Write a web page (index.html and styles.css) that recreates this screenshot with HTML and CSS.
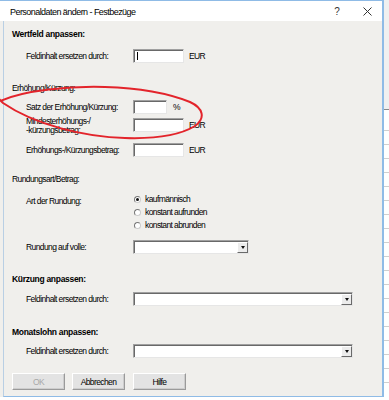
FILE: index.html
```html
<!DOCTYPE html>
<html lang="de">
<head>
    <meta charset="UTF-8">
    <title>Personaldaten ändern - Festbezüge</title>
    <link rel="stylesheet" href="styles.css">
</head>
<body>
<div class="win">
    <div class="titlebar">
        <span class="title">Personaldaten ändern - Festbezüge</span>
        <span class="tbtn help">?</span>
        <span class="tbtn close">
            <svg width="9" height="9" viewBox="0 0 9 9"><path d="M0.5 0.5L8.5 8.5M8.5 0.5L0.5 8.5" stroke="#333" stroke-width="1"/></svg>
        </span>
    </div>
    <div class="client">
        <div class="head bold h1">Wertfeld anpassen:</div>
        <div class="row r1">
            <label>Feldinhalt ersetzen durch:</label>
            <span class="edit w51 caret"></span>
            <span class="unit">EUR</span>
        </div>

        <div class="head h2">Erhöhung/Kürzung:</div>
        <div class="row r2">
            <label>Satz der Erhöhung/Kürzung:</label>
            <span class="edit w34"></span>
            <span class="unit pct">%</span>
        </div>
        <div class="row r3">
            <label class="two">Mindesterhöhungs-/<br>-kürzungsbetrag:</label>
            <span class="edit w51"></span>
            <span class="unit">EUR</span>
        </div>
        <div class="row r4">
            <label>Erhöhungs-/Kürzungsbetrag:</label>
            <span class="edit w51"></span>
            <span class="unit">EUR</span>
        </div>

        <div class="head h3">Rundungsart/Betrag:</div>
        <div class="row r5 top">
            <label class="art">Art der Rundung:</label>
            <ul class="radios">
                <li><span class="radio on"></span>kaufmännisch</li>
                <li><span class="radio"></span>konstant aufrunden</li>
                <li><span class="radio"></span>konstant abrunden</li>
            </ul>
        </div>
        <div class="row r6">
            <label>Rundung auf volle:</label>
            <span class="edit combo w116"><span class="drop"></span></span>
        </div>

        <div class="head bold h4">Kürzung anpassen:</div>
        <div class="row r7">
            <label>Feldinhalt ersetzen durch:</label>
            <span class="edit combo w220"><span class="drop"></span></span>
        </div>

        <div class="head bold h5">Monatslohn anpassen:</div>
        <div class="row r8">
            <label>Feldinhalt ersetzen durch:</label>
            <span class="edit combo w220"><span class="drop"></span></span>
        </div>

        <div class="buttons">
            <button class="btn off">OK</button>
            <button class="btn">Abbrechen</button>
            <button class="btn hilfe">Hilfe</button>
        </div>
    </div>
</div>
<svg class="mark" width="389" height="400" viewBox="0 0 389 400">
    <path d="M0 101 C25 90 70 86 105 87 C140 88 170 94 190 102 C203 108 206 118 195 126 C180 135 155 139 125 138 C85 137 35 125 3 103 C1 101 0 100 -1 99" fill="none" stroke="#e3242b" stroke-width="2"/>
</svg>
</body>
</html>
```

FILE: styles.css
```css
*{
    margin: 0;
    padding: 0;
    box-sizing: border-box;
}
ul{
    list-style: none;
}
body{
    width: 389px;
    height: 400px;
    overflow: hidden;
    position: relative;
    font-family: "Liberation Sans", Arial, sans-serif;
    font-size: 8.5px;
    letter-spacing: -0.6px;
    color: #000;
    background:
        linear-gradient(#f0f0f0, #f0f0f0) 0 0 / 100% 109px no-repeat,
        linear-gradient(#8a8a8a, #8a8a8a) 0 109px / 100% 1px no-repeat,
        repeating-linear-gradient(#fff 0 13px, #cfcfcf 13px 14px) 0 117px / 100% 270px no-repeat,
        #fff;
}
.win{
    width: 384px;
    height: 397px;
    border-top: 1px solid #8fbbe6;
    border-right: 2px solid #8fbbe6;
    background: #f0efec;
}
.titlebar{
    height: 20px;
    background: #fff;
    display: flex;
    align-items: center;
    padding-left: 10px;
}
.title{
    font-size: 9px;
    letter-spacing: -0.55px;
    color: #000;
    margin-top: 1px;
}
.tbtn{
    width: 30px;
    height: 20px;
    display: flex;
    align-items: center;
    justify-content: center;
}
.help{
    margin-left: auto;
    font-size: 10px;
    letter-spacing: 0;
    color: #333;
}
.client{
    height: 376px;
    margin-left: 3px;
    border-left: 1px solid #b9cfe4;
    border-bottom: 1px solid #8fbbe6;
    padding: 7px 0 0 8px;
}
.head{
    height: 12px;
    line-height: 12px;
}
.bold{
    font-weight: bold;
    letter-spacing: -0.3px;
}
.h2{ margin-top: 19px; }
.h3{ margin-top: 16px; }
.h4{ margin-top: 19px; }
.h5{ margin-top: 20px; }
.row{
    display: flex;
    align-items: center;
    height: 14px;
    margin-left: 14px;
}
.row.top{
    align-items: flex-start;
    height: auto;
}
.row label{
    width: 107px;
    flex: none;
    line-height: 12px;
}
.row label.two{
    line-height: 9px;
    padding-top: 2px;
}
.row label.art{
    line-height: 13px;
    padding-top: 2px;
}
.r1{ margin-top: 9px; }
.r2{ margin-top: 6px; }
.r3{ margin-top: 4px; }
.r4{ margin-top: 11px; }
.r5{ margin-top: 8px; }
.r6{ margin-top: 8px; }
.r7{ margin-top: 7px; }
.r8{ margin-top: 6px; }
.edit{
    display: inline-block;
    height: 14px;
    background: #fff;
    border: 1px solid;
    border-color: #a0a0a0 #e6e6e6 #e6e6e6 #a0a0a0;
    box-shadow: inset 1px 1px 0 #696969;
    position: relative;
}
.w34{ width: 34px; }
.w51{ width: 51px; }
.w116{ width: 116px; }
.w220{ width: 220px; }
.caret::after{
    content: "";
    position: absolute;
    left: 3px;
    top: 2px;
    width: 1px;
    height: 8px;
    background: #000;
}
.unit{
    margin-left: 5px;
}
.pct{
    margin-left: 6px;
}
.radios li{
    height: 13px;
    line-height: 13px;
    display: flex;
    align-items: center;
}
.radio{
    width: 7px;
    height: 7px;
    border-radius: 50%;
    border: 1px solid;
    border-color: #777 #ccc #ccc #777;
    background: #fff;
    margin: 0 4px 0 1px;
    position: relative;
}
.radio.on::after{
    content: "";
    position: absolute;
    left: 1px;
    top: 1px;
    width: 3px;
    height: 3px;
    border-radius: 50%;
    background: #111;
}
.combo{
    display: inline-flex;
    justify-content: flex-end;
    padding: 1px 0 0 0;
}
.drop{
    width: 11px;
    height: 11px;
    background: #ececec;
    border: 1px solid;
    border-color: #fff #6a6a6a #6a6a6a #fff;
    display: flex;
    align-items: center;
    justify-content: center;
}
.drop::after{
    content: "";
    border-left: 2.5px solid transparent;
    border-right: 2.5px solid transparent;
    border-top: 3px solid #111;
}
.buttons{
    display: flex;
    margin-top: 15px;
}
.btn{
    width: 53px;
    height: 17px;
    margin-right: 7px;
    font-family: inherit;
    font-size: 8.5px;
    letter-spacing: -0.6px;
    color: #000;
    background: #e3e3e3;
    border: 1px solid;
    border-color: #fff #9a9a9a #9a9a9a #fff;
    box-shadow: inset -1px -1px 0 #cdcdcd;
}
.btn.off{
    color: #a8a8a8;
}
.btn.hilfe{
    margin-left: 1px;
}
.mark{
    position: absolute;
    left: 0;
    top: 0;
    pointer-events: none;
}
```
